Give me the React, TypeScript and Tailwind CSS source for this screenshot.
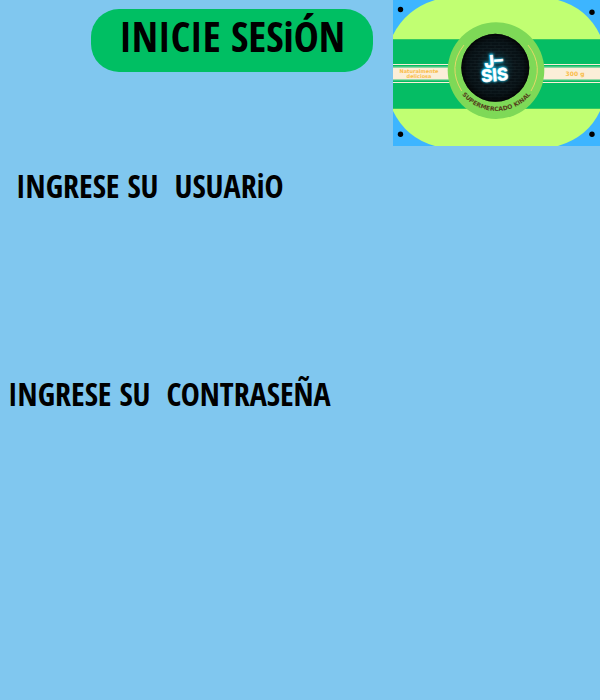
import React from "react";

function Logo() {
  return (
    <svg viewBox="0 0 207 146" className="block w-full" role="img" aria-label="J-SIS Supermercado Kinal">
      <defs>
        <path id="ring" d="M59.5 67 A44 44 0 0 0 147.5 67" />
        <pattern id="bricks" width="8" height="6" patternUnits="userSpaceOnUse">
          <rect width="8" height="6" fill="#080b0e" />
          <path d="M0 .5H8M0 3.5H8M2 .5V3.5M6 3.5V6" stroke="#1b2226" strokeWidth=".5" />
        </pattern>
        <radialGradient id="shade">
          <stop offset="0" stopColor="#1595b0" stopOpacity=".45" />
          <stop offset=".6" stopColor="#0a2a33" stopOpacity=".2" />
          <stop offset="1" stopColor="#000" stopOpacity=".7" />
        </radialGradient>
        <filter id="glow" x="-50%" y="-50%" width="200%" height="200%">
          <feGaussianBlur stdDeviation="1.3" />
        </filter>
      </defs>
      <rect width="207" height="146" fill="#3db5ff" />
      <path d="M42 0Q13 9 0 35V111Q13 138 42 146H165Q195 137 207 111V35Q194 8 165 0Z" fill="#c1ff72" />
      <rect y="39" width="207" height="69.5" fill="#05bd64" />
      <path d="M0 39.5H207M0 108.5H207" stroke="#35cb60" />
      <path d="M0 64.5H207M0 82.5H207" stroke="#fbeed8" />
      <path d="M0 66.8H207M0 80H207" stroke="#7bd79b" strokeWidth=".8" />
      <rect y="67.5" width="207" height="12" fill="#fbeed8" />
      <g fill="#000">
        <circle cx="7.5" cy="9.5" r="2.7" />
        <circle cx="199" cy="12.3" r="2.7" />
        <circle cx="7.5" cy="134.3" r="2.7" />
        <circle cx="199" cy="134.3" r="2.7" />
      </g>
      <g fill="#f9bd4b" fontWeight="700" textAnchor="middle" className="font-['DejaVu_Sans',sans-serif]">
        <text x="26" y="73" fontSize="5">Naturalmente</text>
        <text x="26" y="78" fontSize="5">deliciosa</text>
        <text x="182" y="76" fontSize="6">300 g</text>
      </g>
      <circle cx="103" cy="70.6" r="48.3" fill="#7ed957" />
      <path d="M71 45Q54 67 68.7 91M135 45Q152 67 138 91" fill="none" stroke="#e3d868" strokeWidth="1" />
      <circle cx="102.3" cy="67.8" r="34" fill="url(#bricks)" />
      <circle cx="102.3" cy="67.8" r="34" fill="url(#shade)" />
      <g transform="rotate(-5 102 68)" textAnchor="middle" fontWeight="700" fontSize="17" className="font-[Inter,sans-serif]">
        <g fill="#19c8f0" stroke="#19c8f0" strokeWidth="1.5" filter="url(#glow)">
          <text x="101" y="67">J–</text>
          <text x="101" y="81">SIS</text>
        </g>
        <g fill="#fff" stroke="#fff" strokeWidth=".5">
          <text x="101" y="67">J–</text>
          <text x="101" y="81">SIS</text>
        </g>
      </g>
      <text fontSize="6" fill="#54401c" fontWeight="700" textAnchor="middle" className="font-['DejaVu_Sans',sans-serif]">
        <textPath href="#ring" startOffset="50%">SUPERMERCADO KINAL</textPath>
      </text>
    </svg>
  );
}

export default function App() {
  return (
    <main className="min-h-screen bg-[#80c7ef] font-['Open_Sans_Condensed','Roboto_Condensed',sans-serif] font-bold text-black">
      <header className="flex items-start">
        <div className="flex grow justify-end pt-[9px] pr-5">
          <h1 className="rounded-[28px] bg-[#00bf63] px-7 pt-[3px] pb-3 text-[42px] leading-12">INICIE SESiÓN</h1>
        </div>
        <div className="w-[207px] shrink-0">
          <Logo />
        </div>
      </header>
      <section className="px-4 pt-5">
        <h2 className="text-[32px] leading-10 whitespace-pre">{"INGRESE SU  USUARiO"}</h2>
      </section>
      <section className="px-2 pt-42">
        <h2 className="text-[32px] leading-10 whitespace-pre">{"INGRESE SU  CONTRASEÑA"}</h2>
      </section>
    </main>
  );
}
